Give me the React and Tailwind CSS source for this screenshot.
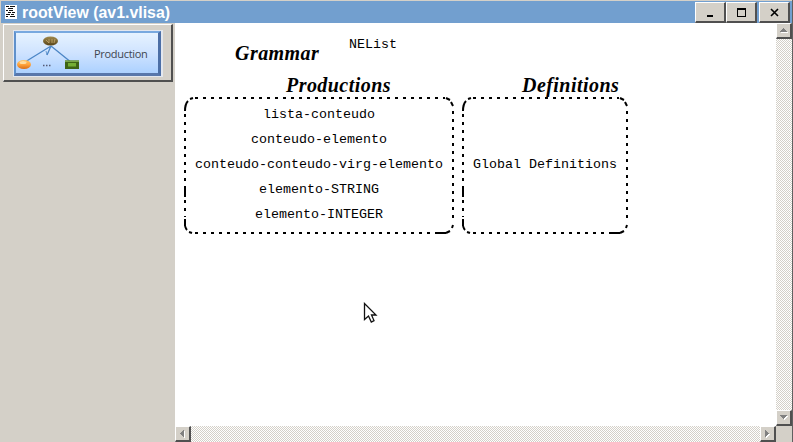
const raised =
  "flex items-center justify-center bg-[#d4d0c8] border-t border-l border-t-white border-l-white border-r-2 border-b-2 border-r-[#505050] border-b-[#505050]";

const checker =
  "bg-[conic-gradient(#d4d0c8_25%,#fff_0_50%,#d4d0c8_0_75%,#fff_0)] bg-[length:2px_2px]";

const mono =
  "font-['Liberation_Mono',monospace] text-[13.34px] leading-[25px] whitespace-pre";
const heading =
  "font-['Liberation_Serif',serif] font-bold italic text-[20px] leading-[22px] tracking-[0.45px] whitespace-nowrap";

function TitleBar() {
  return (
    <div className="flex h-[22px] mt-px ml-px bg-[#729fcf]">
      <svg className="mt-[4px] ml-[4px] shrink-0" width="12" height="14" shapeRendering="crispEdges">
        <rect width="12" height="14" fill="#fff" />
        <path
          d="M1 1.500h3M5 1.500h5M3 3.500h5M1 5.500h2M4 5.500h4M3 7.500h3M7 7.500h3M1 9.500h4M6 9.500h3M1 11.500h2M5 11.500h5"
          stroke="#111"
        />
      </svg>
      <div className="ml-[5px] mt-px font-['Liberation_Sans',sans-serif] font-bold text-[15.9px] leading-[21px] text-white whitespace-nowrap">
        rootView (av1.vlisa)
      </div>
      <div className="flex ml-auto mr-[2px] mt-px h-[21px]">
        <div className={`${raised} w-[31px]`}>
          <svg width="28" height="18" shapeRendering="crispEdges">
            <rect x="11" y="12" width="6" height="2" />
          </svg>
        </div>
        <div className={`${raised} w-[31px]`}>
          <svg width="28" height="18" shapeRendering="crispEdges">
            <path d="M10.500 5.500h8v8h-8z" fill="none" stroke="#000" />
            <rect x="10" y="5" width="9" height="2" />
          </svg>
        </div>
        <div className={`${raised} w-[31px] ml-[2px]`}>
          <svg width="28" height="18">
            <path d="M11 6l7 7M18 6l-7 7" stroke="#000" strokeWidth="1.6" />
          </svg>
        </div>
      </div>
    </div>
  );
}

function ProductionButton() {
  return (
    <div className="ml-[3px] mt-px w-[170px] h-[58px] bg-[#d4d0c8] border-t border-l border-t-white border-l-white border-r-2 border-b-2 border-r-[#505050] border-b-[#505050] pl-[9px] pt-[5px]">
      <div className="w-[150px] h-[47px] bg-[#e3e7ee] p-px">
        <div className="flex w-[147px] h-[45px] bg-linear-to-b from-[#e6f3ff] via-[#cfe3ff] to-[#acd1ff] border-t-2 border-l-2 border-r-3 border-b-3 border-t-[#78a9df] border-l-[#5f91cc] border-r-[#4c6fa6] border-b-[#5877ab]">
          <svg className="-ml-[2px] -mt-[2px] shrink-0" width="78" height="45">
            <defs>
              <linearGradient id="orange" x2="0" y2="1">
                <stop stopColor="#ffc565" />
                <stop offset=".5" stopColor="#ffa33b" />
                <stop offset="1" stopColor="#d86d16" />
              </linearGradient>
              <linearGradient id="brown" x2="0" y2="1">
                <stop stopColor="#a08a4d" />
                <stop offset="1" stopColor="#594519" />
              </linearGradient>
            </defs>
            <path d="M37 15L11 31M37 15L58 32M37 15L33 24" stroke="#4c86c6" strokeWidth="1.3" fill="none" />
            <path d="M33 24l-1-4" stroke="#4c86c6" strokeWidth=".8" />
            <ellipse cx="36.5" cy="10" rx="7.5" ry="4.5" fill="url(#brown)" />
            <path d="M32 9l3 3M35 8v4M38 8v4M41 8l-1 4" stroke="#c5aa6e" strokeWidth=".8" />
            <ellipse cx="10" cy="33.5" rx="7" ry="4.5" fill="url(#orange)" />
            <ellipse cx="9" cy="31.5" rx="3.5" ry="1.5" fill="#ffdda0" />
            <rect x="51" y="29.500" width="14" height="8.500" fill="#3d6416" />
            <rect x="51" y="29.500" width="14" height="1.500" fill="#79a647" />
            <rect x="54" y="32" width="8" height="3.500" fill="#74ae35" />
            <path d="M29 34.500h1.500M32 34.500h1.500M35 34.500h1.500" stroke="#555a75" strokeWidth="1.3" />
          </svg>
          <div className="ml-[2px] mt-[11px] font-['Open_Sans',sans-serif] text-[11px] tracking-[-0.3px] leading-[20px] text-[#404650]">
            Production
          </div>
        </div>
      </div>
    </div>
  );
}

function Arrow({ d }) {
  return (
    <svg width="13" height="13" className="shrink-0" shapeRendering="crispEdges">
      <path d={d} fill="#fff" transform="translate(1 1)" />
      <path d={d} fill="#808080" />
    </svg>
  );
}

function DottedBox({ width, children }) {
  const r = width - 1;
  return (
    <div className="grid h-[137px]">
      <svg className="col-start-1 row-start-1" width={width} height="137" fill="none" stroke="#000" strokeWidth="2">
        <g shapeRendering="crispEdges">
          <path d={`M11 1H${r - 8}`} strokeDasharray="3 5" />
          <path d={`M${r} 14V126`} strokeDasharray="3 5" />
          <path d={`M11 136H${r - 14}`} strokeDasharray="3 5" />
          <path d="M1 17V88M1 103V120" strokeDasharray="3 5" />
          <path d={`M1 89V100M1 122V129M${r - 15} 136H${r - 7}`} />
        </g>
        <path d={`M1 14Q1 7 4 4M6 2l3 -1M1 129Q2 132 3 133M5 135l3 1M${r - 7} 1l4 2M${r - 2} 5l2 4M${r} 128l-1 3M${r - 7} 136l4 -2`} />
      </svg>
      <div className="col-start-1 row-start-1 flex flex-col items-center justify-center text-center pb-[2px]">
        {children}
      </div>
    </div>
  );
}

function Canvas() {
  return (
    <div className="flex-1 h-[403px] bg-white overflow-hidden text-black">
      <div className="flex pt-[9px] h-[50px]">
        <div className={`${heading} ml-[60px] mt-[10px] w-[114px]`}>Grammar</div>
        <div className={mono}>NEList</div>
      </div>
      <div className="flex items-start ml-[9px]">
        <div className="w-[270px]">
          <div className={`${heading} pl-[102px] pt-[1px] h-[24px]`}>Productions</div>
          <DottedBox width={270}>
            <div className={mono}>lista-conteudo</div>
            <div className={mono}>conteudo-elemento</div>
            <div className={mono}>conteudo-conteudo-virg-elemento</div>
            <div className={mono}>elemento-STRING</div>
            <div className={mono}>elemento-INTEGER</div>
          </DottedBox>
        </div>
        <div className="w-[166px] ml-[8px]">
          <div className={`${heading} pl-[60px] pt-[1px] h-[24px]`}>Definitions</div>
          <DottedBox width={166}>
            <div className={mono}>Global Definitions</div>
          </DottedBox>
        </div>
      </div>
      <svg className="ml-[188px] mt-[68px]" width="15" height="22">
        <path
          d="M1.500 1.500V17.500L5.500 14L8.300 20L11 18.600L8.500 13H13z"
          fill="#fff"
          stroke="#111"
          strokeWidth="1.300"
        />
      </svg>
    </div>
  );
}

export default function App() {
  return (
    <div className="w-[793px] h-[442px] overflow-hidden bg-[#d4d0c8] border-r border-[#606060]">
      <TitleBar />
      <div className="flex h-[419px]">
        <div className="w-[175px] shrink-0">
          <ProductionButton />
        </div>
        <div className="flex flex-col flex-1">
          <div className="flex h-[403px]">
            <Canvas />
            <div className={`flex flex-col justify-between w-[16px] ${checker}`}>
              <div className={`${raised} h-[16px]`}>
                <Arrow d="M6 4h1v1h1v1h1v1h1v1H3V7h1V6h1V5h1z" />
              </div>
              <div className={`${raised} h-[16px]`}>
                <Arrow d="M3 4h7v1H9v1H8v1H7v1H6V7H5V6H4V5H3z" />
              </div>
            </div>
          </div>
          <div className="flex h-[16px]">
            <div className={`flex justify-between flex-1 ${checker}`}>
              <div className={`${raised} w-[16px]`}>
                <Arrow d="M8 3v7H7V9H6V8H5V7H4V6h1V5h1V4h1V3z" />
              </div>
              <div className={`${raised} w-[16px]`}>
                <Arrow d="M4 3h1v1h1v1h1v1h1v1H7v1H6v1H5v1H4z" />
              </div>
            </div>
            <div className="w-[16px] bg-[#d4d0c8]" />
          </div>
        </div>
      </div>
    </div>
  );
}
